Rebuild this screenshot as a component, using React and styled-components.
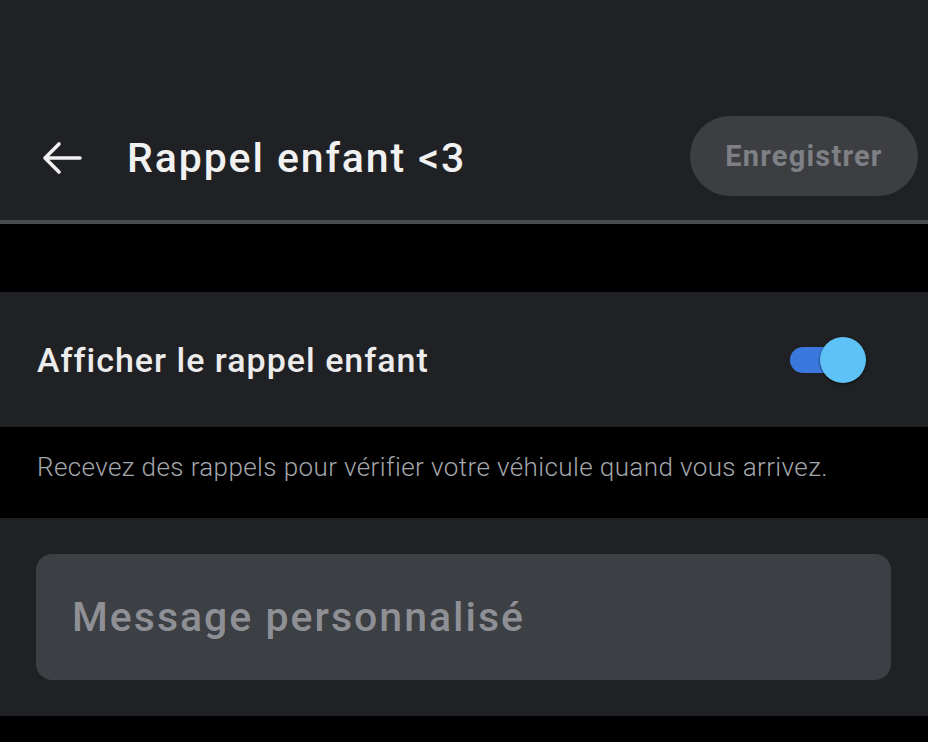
import styled, { createGlobalStyle } from "styled-components";

const GlobalStyle = createGlobalStyle`
    html, body {
        margin: 0;
        padding: 0;
        background: #000;
    }
    * {
        box-sizing: border-box;
    }
`;

export default function App() {
    return (
        <>
            <GlobalStyle />
            <Screen>
                <TopBar>
                    <BackButton aria-label="Retour">
                        <svg width="40" height="34" viewBox="0 0 40 34" fill="none">
                            <path
                                d="M38 17H4M17 3L3 17l14 14"
                                stroke="#f1f1f1"
                                strokeWidth="3.6"
                                strokeLinecap="round"
                                strokeLinejoin="round"
                            />
                        </svg>
                    </BackButton>
                    <Title>Rappel enfant &lt;3</Title>
                    <SaveButton disabled>Enregistrer</SaveButton>
                </TopBar>
                <Gap $height={68} />
                <Section>
                    <SettingRow>
                        <Label>Afficher le rappel enfant</Label>
                        <Toggle role="switch" aria-checked="true">
                            <Track />
                            <Thumb />
                        </Toggle>
                    </SettingRow>
                </Section>
                <Hint>Recevez des rappels pour vérifier votre véhicule quand vous arrivez.</Hint>
                <Section>
                    <InputWrap>
                        <MessageInput placeholder="Message personnalisé" />
                    </InputWrap>
                </Section>
                <Gap $height={26} />
            </Screen>
        </>
    );
}

const Screen = styled.div`
    width: 928px;
    height: 742px;
    overflow: hidden;
    background: #000;
    font-family: Roboto, "Noto Sans", sans-serif;
    display: flex;
    flex-direction: column;
`;

const TopBar = styled.header`
    height: 224px;
    padding: 120px 10px 24px 40px;
    background: #202124;
    border-bottom: 4px solid #4a4b4f;
    display: flex;
    align-items: center;
`;

const BackButton = styled.button`
    width: 44px;
    height: 44px;
    padding: 0;
    border: none;
    background: none;
    display: flex;
    align-items: center;
    justify-content: center;
`;

const Title = styled.h1`
    margin: 0 0 0 43px;
    flex: 1;
    color: #f1f1f1;
    font-size: 41px;
    font-weight: 500;
    letter-spacing: 1.9px;
`;

const SaveButton = styled.button`
    width: 228px;
    height: 80px;
    margin-top: -4px;
    border: none;
    border-radius: 40px;
    background: #3c3e42;
    color: #7e8086;
    font-family: Roboto, "Noto Sans", sans-serif;
    font-size: 29px;
    font-weight: 700;
    letter-spacing: 1.2px;
`;

const Gap = styled.div`
    height: ${(p) => p.$height}px;
    flex-shrink: 0;
`;

const Section = styled.section`
    background: #202124;
    flex-shrink: 0;
`;

const SettingRow = styled.div`
    height: 135px;
    padding: 0 62px 0 37px;
    display: flex;
    align-items: center;
    justify-content: space-between;
`;

const Label = styled.span`
    color: #ececec;
    font-size: 34px;
    font-weight: 500;
    letter-spacing: 1px;
`;

const Toggle = styled.div`
    position: relative;
    width: 76px;
    height: 46px;
`;

const Track = styled.div`
    position: absolute;
    left: 0;
    top: 10px;
    width: 60px;
    height: 26px;
    border-radius: 13px;
    background: #3a78de;
`;

const Thumb = styled.div`
    position: absolute;
    right: 0;
    top: 0;
    width: 46px;
    height: 46px;
    border-radius: 50%;
    background: #5ec2f7;
    box-shadow: 0 1px 3px rgba(0, 0, 0, 0.6);
`;

const Hint = styled.p`
    margin: 0;
    height: 91px;
    padding: 0 37px 12px;
    display: flex;
    align-items: center;
    color: #a3a6ab;
    font-size: 26px;
    font-weight: 300;
    letter-spacing: 0.4px;
    white-space: nowrap;
    flex-shrink: 0;
`;

const InputWrap = styled.div`
    padding: 36px 37px 36px 36px;
`;

const MessageInput = styled.input`
    width: 100%;
    height: 126px;
    padding: 0 37px 0 36px;
    border: none;
    border-radius: 16px;
    background: #3c3f43;
    color: #e8e8e8;
    font-family: Roboto, "Noto Sans", sans-serif;
    font-size: 41px;
    font-weight: 500;
    letter-spacing: 2px;
    outline: none;

    &::placeholder {
        color: #8e9096;
    }
`;
